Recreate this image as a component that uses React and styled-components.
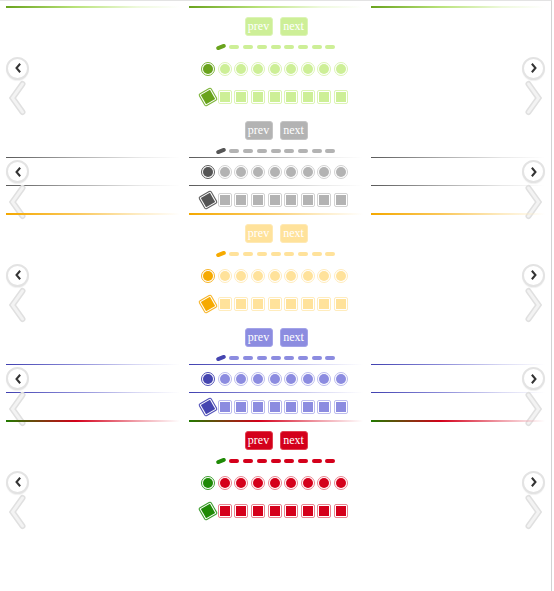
import React from 'react';
import styled, { createGlobalStyle } from 'styled-components';

const Global = createGlobalStyle`
  html, body { margin: 0; padding: 0; background: #fff; }
  body { font-family: "Liberation Serif", serif; }
`;

const themes = [
  {
    fill: '#cdef97', ring: '#dcf4b4', border: '#dcf4b6', active: '#69a31d', activeRing: '#7db43a',
    line: 'linear-gradient(to right, #69a31d 0%, #b9e27a 40%, #eef9dc 75%, rgba(255,255,255,0) 100%)',
    lineAt: 'top',
  },
  {
    fill: '#b3b3b3', ring: '#d2d2d2', border: '#c4c4c4', active: '#555555', activeRing: '#5f5f5f',
    line: 'linear-gradient(to right, #5a5a5a 0%, #a9a9a9 40%, #e6e6e6 75%, rgba(255,255,255,0) 100%)',
    lineAt: 'inner',
  },
  {
    fill: '#ffe29b', ring: '#ffecbd', border: '#ffe9b4', active: '#f6aa00', activeRing: '#f7b52a',
    line: 'linear-gradient(to right, #f4a800 0%, #fac758 40%, #fdebc2 75%, rgba(255,255,255,0) 100%)',
    lineAt: 'top',
  },
  {
    fill: '#8c8ce0', ring: '#bcbcee', border: '#a3a3e8', active: '#4545b0', activeRing: '#5252b8',
    line: 'linear-gradient(to right, #4040b0 0%, #8a8ad8 40%, #d8d8f4 75%, rgba(255,255,255,0) 100%)',
    lineAt: 'inner',
  },
  {
    fill: '#d4001b', ring: '#ea8591', border: '#e0404f', active: '#1f8a06', activeRing: '#3d9e2e',
    line: 'linear-gradient(to right, #227a00 0%, #d4001b 40%, #f0a0aa 75%, rgba(255,255,255,0) 100%)',
    lineAt: 'top',
  },
];

const Frame = styled.div`
  box-sizing: border-box;
  width: 552px;
  min-height: 591px;
  border-top: 1px solid #e3e3e3;
  border-right: 1px solid #d2d2d2;
  padding: 5px 0 0 6px;
`;

const Stack = styled.div`
  width: 539px;
  display: flex;
  flex-direction: column;
`;

const Section = styled.section`
  display: flex;
  flex-direction: column;
`;

const Band = styled.div`
  display: grid;
  grid-template-columns: 174px 174px 174px;
  column-gap: 8.5px;
  height: ${p => p.$h}px;
`;

const Cell = styled.div`
  display: flex;
  min-width: 0;
  height: 100%;
  justify-content: ${p => (p.$side === 'right' ? 'flex-end' : p.$side === 'mid' ? 'center' : 'flex-start')};
  align-items: flex-start;
  background-image: ${p => (p.$line ? p.$line : 'none')};
  background-repeat: no-repeat;
  background-size: 100% ${p => p.$lw || 1}px;
  background-position: 0 0;
`;

const MidTop = styled.div`
  display: flex;
  flex-direction: column;
  align-items: center;
  padding-top: 11px;
`;

const Buttons = styled.div`
  display: flex;
  gap: 7px;
  margin-left: 1px;
`;

const NavButton = styled.span`
  box-sizing: border-box;
  width: 28px;
  height: 19px;
  border-radius: 3px;
  background: ${p => p.$t.fill};
  border: 1px solid ${p => p.$t.border};
  color: #fff;
  font-family: "Liberation Serif", "Times New Roman", serif;
  font-size: 12px;
  line-height: 16px;
  text-align: center;
`;

const Dashes = styled.div`
  display: flex;
  gap: 3.7px;
  margin-top: 9px;
`;

const Dash = styled.span`
  display: block;
  width: 10px;
  height: 4px;
  border-radius: 2px;
  background: ${p => (p.$active ? p.$t.active : p.$t.fill)};
  transform: ${p => (p.$active ? 'rotate(-20deg)' : 'none')};
`;

const Pager = styled.div`
  display: flex;
  gap: 2.6px;
  padding-top: ${p => p.$pt}px;
  margin-left: -2px;
`;

const Dot = styled.span`
  box-sizing: border-box;
  display: block;
  width: 14px;
  height: 14px;
  padding: 1px;
  border-radius: ${p => (p.$square ? '2px' : '50%')};
  border: 1px solid ${p => (p.$active ? p.$t.activeRing : p.$t.ring)};
  background: ${p => (p.$active ? p.$t.active : p.$t.fill)};
  background-clip: content-box;
  transform: ${p => (p.$square && p.$active ? 'rotate(-30deg) scale(1.05)' : 'none')};
`;

const RoundArrow = styled.span`
  box-sizing: border-box;
  display: flex;
  align-items: center;
  justify-content: center;
  width: 23px;
  height: 23px;
  margin-top: 3px;
  border-radius: 50%;
  background: #fff;
  border: 2px solid #e3e3e3;
  box-shadow: 0 1px 1px rgba(0, 0, 0, 0.06);
`;

const BigArrow = styled.svg`
  display: block;
  width: 18px;
  height: 32px;
  margin-top: 1px;
  margin-left: ${p => (p.$dir === 'left' ? '2px' : '0')};
  margin-right: ${p => (p.$dir === 'right' ? '2px' : '0')};
  overflow: visible;
`;

function SmallChevron({ dir }) {
  const pts = dir === 'left' ? '6.5,3.5 3.5,7 6.5,10.5' : '3.5,3.5 6.5,7 3.5,10.5';
  return (
    <svg width="10" height="14" viewBox="0 0 10 14">
      <polyline points={pts} fill="none" stroke="#333" strokeWidth="2" strokeLinecap="square" />
    </svg>
  );
}

function Chevron({ dir }) {
  const pts = dir === 'left' ? '14.5,2 4.5,16 14.5,30' : '3.5,2 13.5,16 3.5,30';
  return (
    <BigArrow $dir={dir} viewBox="0 0 18 32">
      <polyline points={pts} fill="none" stroke="#e0e0e0" strokeWidth="6" strokeLinejoin="miter" strokeLinecap="round" />
      <polyline points={pts} fill="none" stroke="#f3f3f3" strokeWidth="3" strokeLinejoin="miter" strokeLinecap="round" />
    </BigArrow>
  );
}

const N = 9;
const idx = Array.from({ length: N }, (_, i) => i);

function Demo({ t }) {
  const topLine = t.lineAt === 'top' ? t.line : null;
  const innerLine = t.lineAt === 'inner' ? t.line : null;
  const topW = 2;
  return (
    <Section>
      <Band $h={47.5}>
        <Cell $line={topLine} $lw={topW} />
        <Cell $side="mid" $line={topLine} $lw={topW}>
          <MidTop>
            <Buttons>
              <NavButton $t={t}>prev</NavButton>
              <NavButton $t={t}>next</NavButton>
            </Buttons>
            <Dashes>
              {idx.map(i => (
                <Dash key={i} $t={t} $active={i === 0} />
              ))}
            </Dashes>
          </MidTop>
        </Cell>
        <Cell $side="right" $line={topLine} $lw={topW} />
      </Band>
      <Band $h={27.5}>
        <Cell $line={innerLine}>
          <RoundArrow>
            <SmallChevron dir="left" />
          </RoundArrow>
        </Cell>
        <Cell $side="mid" $line={innerLine}>
          <Pager $pt={8}>
            {idx.map(i => (
              <Dot key={i} $t={t} $active={i === 0} />
            ))}
          </Pager>
        </Cell>
        <Cell $side="right" $line={innerLine}>
          <RoundArrow>
            <SmallChevron dir="right" />
          </RoundArrow>
        </Cell>
      </Band>
      <Band $h={28.6}>
        <Cell $line={innerLine}>
          <Chevron dir="left" />
        </Cell>
        <Cell $side="mid" $line={innerLine}>
          <Pager $pt={8.5}>
            {idx.map(i => (
              <Dot key={i} $square $t={t} $active={i === 0} />
            ))}
          </Pager>
        </Cell>
        <Cell $side="right" $line={innerLine}>
          <Chevron dir="right" />
        </Cell>
      </Band>
    </Section>
  );
}

export default function App() {
  return (
    <>
      <Global />
      <Frame>
        <Stack>
          {themes.map((t, i) => (
            <Demo key={i} t={t} />
          ))}
        </Stack>
      </Frame>
    </>
  );
}
